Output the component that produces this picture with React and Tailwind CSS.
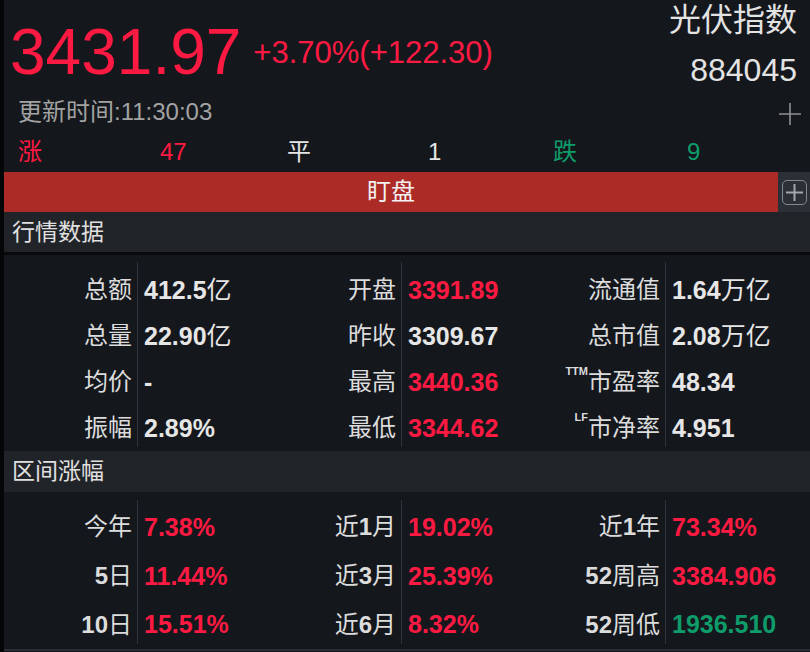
import React from "react";

const FONT = { fontFamily: '"Liberation Sans", "Noto Sans CJK SC", sans-serif' };
const RED = "text-[#fd1a42]";
const GREEN = "text-[#0f9c6b]";
const WHITE = "text-[#e6e6e6]";

function Group({ rows, className = "", pt, rowH, lastNeg }) {
  return (
    <div className={"flex w-[264px] shrink-0 " + className}>
      <div className={"flex w-[133px] flex-col pr-[5px] " + pt}>
        {rows.map((r, i) => (
          <div
            key={i}
            className={"flex items-center justify-end text-[24px] leading-none text-[#dcdcdc] " + rowH + (i === rows.length - 1 ? " " + lastNeg : "")}
          >
            {r.label}
          </div>
        ))}
      </div>
      <div className="w-px bg-[#2f3339]" />
      <div className={"flex flex-1 flex-col pl-[6px] " + pt}>
        {rows.map((r, i) => (
          <div
            key={i}
            className={"flex items-center text-[25px] font-bold leading-none " + rowH + " " + (r.color || WHITE) + (i === rows.length - 1 ? " " + lastNeg : "")}
          >
            {r.value}
          </div>
        ))}
      </div>
    </div>
  );
}

const B = ({ children }) => <span className="font-bold text-[24px]">{children}</span>;
const N = ({ children }) => <span className="font-normal">{children}</span>;

export default function App() {
  const data1 = [
    [
      { label: "总额", value: <span>412.5<N>亿</N></span> },
      { label: "总量", value: <span>22.90<N>亿</N></span> },
      { label: "均价", value: "-" },
      { label: "振幅", value: "2.89%" },
    ],
    [
      { label: "开盘", value: "3391.89", color: RED },
      { label: "昨收", value: "3309.67" },
      { label: "最高", value: "3440.36", color: RED },
      { label: "最低", value: "3344.62", color: RED },
    ],
    [
      { label: "流通值", value: <span>1.64<N>万亿</N></span> },
      { label: "总市值", value: <span>2.08<N>万亿</N></span> },
      {
        label: (
          <span className="flex items-start">
            <span className="mt-[-4px] text-[11px] font-bold leading-none">TTM</span>
            <span>市盈率</span>
          </span>
        ),
        value: "48.34",
      },
      {
        label: (
          <span className="flex items-start">
            <span className="mt-[-4px] text-[11px] font-bold leading-none">LF</span>
            <span>市净率</span>
          </span>
        ),
        value: "4.951",
      },
    ],
  ];
  const data2 = [
    [
      { label: "今年", value: "7.38%", color: RED },
      { label: <span><B>5</B>日</span>, value: "11.44%", color: RED },
      { label: <span><B>10</B>日</span>, value: "15.51%", color: RED },
    ],
    [
      { label: <span>近<B>1</B>月</span>, value: "19.02%", color: RED },
      { label: <span>近<B>3</B>月</span>, value: "25.39%", color: RED },
      { label: <span>近<B>6</B>月</span>, value: "8.32%", color: RED },
    ],
    [
      { label: <span>近<B>1</B>年</span>, value: "73.34%", color: RED },
      { label: <span><B>52</B>周高</span>, value: "3384.906", color: RED },
      { label: <span><B>52</B>周低</span>, value: "1936.510", color: GREEN },
    ],
  ];

  return (
    <div style={FONT} className="flex h-[652px] w-[810px] overflow-hidden bg-[#14171c]">
      <div className="w-[4px] shrink-0 bg-[#050607]" />
      <div className="flex min-w-0 flex-1 flex-col">
        {/* top */}
        <div className="flex h-[172px] flex-col">
          <div className="flex h-[130px] justify-between">
            <div className="flex flex-col pl-[6px]">
              <div className="mt-[20px] flex items-center gap-[12px]">
                <span className={"text-[64px] leading-none " + RED}>3431.97</span>
                <span className={"text-[31px] leading-none " + RED}>+3.70%(+122.30)</span>
              </div>
              <div className="mt-[16px] pl-[8px] text-[24px] leading-none text-[#a3a3a3]">更新时间:11:30:03</div>
            </div>
            <div className="flex flex-col items-end pr-[13px] pt-[4px]">
              <div className="text-[32px] leading-none text-[#e3e3e3]">光伏指数</div>
              <div className="mt-[18px] text-[32px] leading-none text-[#e3e3e3]">884045</div>
              <svg className="mr-[-5px] mt-[16px]" width="24" height="24" viewBox="0 0 24 24">
                <path d="M12 1v22M1 12h22" stroke="#8d9095" strokeWidth="1.6" fill="none" />
              </svg>
            </div>
          </div>
          <div className="flex h-[42px] items-center pt-[2px] text-[24px] leading-none">
            <span className="ml-[14px] w-[142px] text-[#fd1a42]">涨</span>
            <span className="w-[127px] text-[#fd1a42]">47</span>
            <span className="w-[141px] text-[#e6e6e6]">平</span>
            <span className="w-[125px] text-[#e6e6e6]">1</span>
            <span className="w-[134px] text-[#0f9c6b]">跌</span>
            <span className="text-[#0f9c6b]">9</span>
          </div>
        </div>
        {/* red bar */}
        <div className="flex h-[40px]">
          <div className="flex flex-1 items-center justify-center bg-[#ad2b27] text-[24px] leading-none text-[#f2f2f2]">
            盯盘
          </div>
          <div className="flex w-[32px] items-center justify-center bg-[#2b2f36]">
            <div className="flex h-[25px] w-[25px] items-center justify-center rounded-[5px] border-[1.5px] border-[#85888e]">
              <svg width="17" height="17" viewBox="0 0 17 17">
                <path d="M8.5 0v17M0 8.5h17" stroke="#a3a6ab" strokeWidth="2" fill="none" />
              </svg>
            </div>
          </div>
        </div>
        {/* header 1 */}
        <div className="flex h-[40px] items-center bg-[#202328] pl-[8px] text-[23px] leading-none text-[#e0e0e0]">
          行情数据
        </div>
        <div className="h-[3px] bg-[#08090b]" />
        {/* data block 1 */}
        <div className="flex h-[196px] pb-[4px] pt-[7px]">
          {data1.map((rows, i) => (
            <Group key={i} rows={rows} pt="pt-[5px]" rowH="h-[46px]" lastNeg="-mb-[4px]" />
          ))}
        </div>
        {/* header 2 */}
        <div className="flex h-[41px] items-center bg-[#202328] pl-[8px] text-[23px] leading-none text-[#e0e0e0]">
          区间涨幅
        </div>
        {/* data block 2 */}
        <div className="flex h-[157px] pb-[5px] pt-[8px]">
          {data2.map((rows, i) => (
            <Group key={i} rows={rows} pt="pt-[3px]" rowH="h-[49px]" lastNeg="-mb-[5px]" />
          ))}
        </div>
        <div className="h-[2px] bg-[#2a2d33]" />
      </div>
    </div>
  );
}
